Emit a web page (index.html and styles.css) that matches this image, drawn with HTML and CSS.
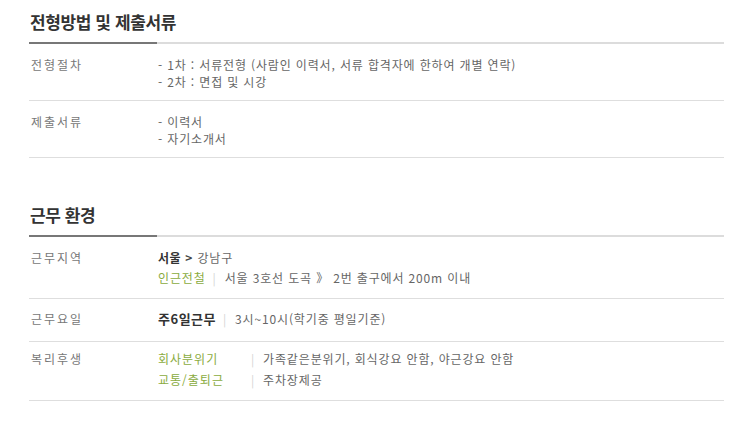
FILE: index.html
```html
<!DOCTYPE html>
<html lang="ko">
<head>
<meta charset="utf-8">
<link rel="stylesheet" href="styles.css">
</head>
<body>
<div class="wrap">
  <section class="sec">
    <h2 class="sec-title">전형방법 및 제출서류</h2>
    <div class="sec-line"><span class="sec-line-dark"></span></div>
    <div class="row row-a">
      <div class="label">전형절차</div>
      <div class="value">
        <p class="ln">- 1차 : 서류전형 (사람인 이력서, 서류 합격자에 한하여 개별 연락)</p>
        <p class="ln">- 2차 : 면접 및 시강</p>
      </div>
    </div>
    <div class="row row-a">
      <div class="label">제출서류</div>
      <div class="value">
        <p class="ln">- 이력서</p>
        <p class="ln">- 자기소개서</p>
      </div>
    </div>
  </section>

  <section class="sec sec2">
    <h2 class="sec-title">근무 환경</h2>
    <div class="sec-line"><span class="sec-line-dark"></span></div>
    <div class="row row-loc">
      <div class="label">근무지역</div>
      <div class="value">
        <p class="ln"><b class="strong">서울</b> <span class="arrow">&gt;</span> 강남구</p>
        <p class="ln ln-gap"><span class="green">인근전철</span><span class="bar">|</span>서울 3호선 도곡 》 2번 출구에서 200m 이내</p>
      </div>
    </div>
    <div class="row row-day">
      <div class="label">근무요일</div>
      <div class="value">
        <p class="ln"><b class="strong big">주6일근무</b><span class="bar">|</span>3시~10시(학기중 평일기준)</p>
      </div>
    </div>
    <div class="row row-ben">
      <div class="label">복리후생</div>
      <div class="value">
        <p class="ln ben"><span class="green key">회사분위기</span><span class="bar">|</span>가족같은분위기, 회식강요 안함, 야근강요 안함</p>
        <p class="ln ben ln-gap2"><span class="green key">교통/출퇴근</span><span class="bar">|</span>주차장제공</p>
      </div>
    </div>
  </section>
</div>
</body>
</html>
```

FILE: styles.css
```css
html, body {
  margin: 0;
  padding: 0;
  background: #fff;
}
body {
  font-family: "Noto Sans CJK KR", "Noto Sans", sans-serif;
  color: #666;
  font-size: 12px;
}
.wrap {
  width: 695px;
  margin-left: 29px;
  padding-top: 11px;
}
.sec-title {
  margin: 0 0 0 1px;
  font-size: 17px;
  font-weight: bold;
  color: #333;
  line-height: 22px;
  height: 31px;
  letter-spacing: -0.4px;
}
.sec2 {
  padding-top: 46px;
}
.sec2 .sec-title {
  height: 31px;
}
.sec-line {
  height: 2px;
  background: #dcdcdc;
  display: flex;
}
.sec-line-dark {
  width: 128px;
  background: #777;
}
.row {
  display: flex;
  border-bottom: 1px solid #dedede;
}
.row-a {
  padding: 12px 0 10px;
}
.row-loc {
  padding: 12px 0 12px;
}
.row-day {
  padding: 11px 0 14px;
}
.row-ben {
  padding: 8px 0 12px;
}
.label {
  width: 127px;
  padding-left: 2px;
  color: #777;
  letter-spacing: 2px;
  line-height: 17px;
}
.value {
  flex: 1;
  color: #666;
  letter-spacing: 0.85px;
}
.ln {
  margin: 0;
  line-height: 17px;
  white-space: nowrap;
}
.ln-gap {
  margin-top: 3px;
}
.ln-gap2 {
  margin-top: 4px;
}
.strong {
  color: #333;
  font-weight: bold;
  letter-spacing: 0.5px;
}
.big {
  font-size: 13px;
  letter-spacing: 0.5px;
}
.arrow {
  color: #444;
  font-weight: bold;
}
.green {
  color: #8aab3e;
}
.key {
  display: inline-block;
  width: 90px;
  letter-spacing: 1px;
}
.bar {
  color: #d4d4d4;
  margin: 0 8px 0 7px;
}
.ben .bar {
  margin-left: 3px;
}
```
